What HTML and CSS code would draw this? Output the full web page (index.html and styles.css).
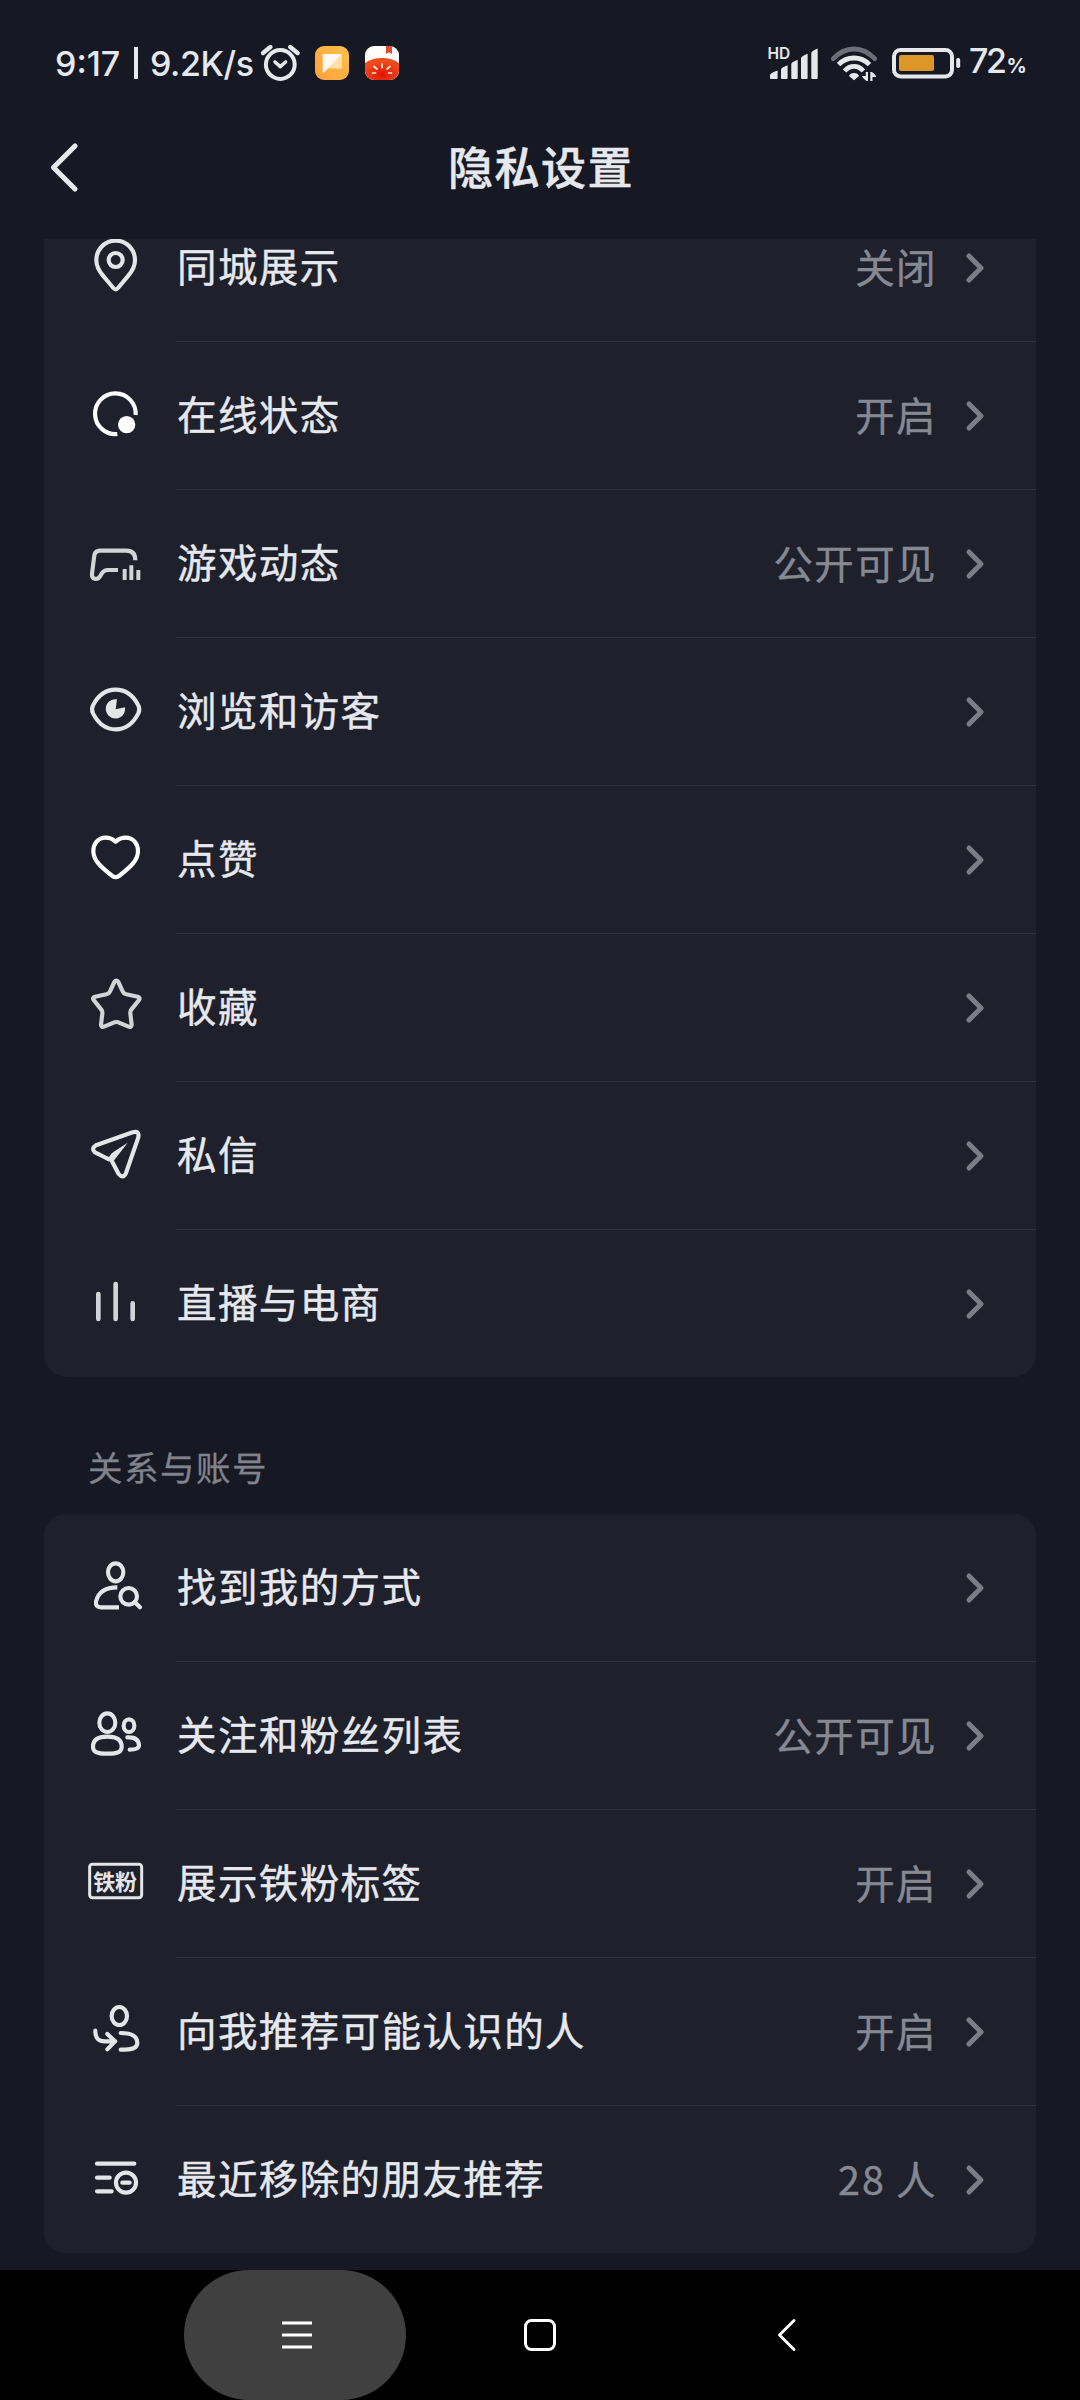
FILE: index.html
```html
<!DOCTYPE html>
<html lang="zh-CN">
<head>
<meta charset="utf-8">
<title>隐私设置</title>
<link rel="stylesheet" href="styles.css">
</head>
<body>
<div class="screen">
  <header class="status">
    <div class="status-left">
      <span class="clock">9:17</span><span class="bar"></span><span class="speed">9.2K/s</span>
      <svg class="alarm" width="42" height="40" viewBox="259 43 42 40">
        <g fill="none" stroke="#e6e8ec" stroke-width="4" stroke-linecap="round" stroke-linejoin="round">
          <circle cx="280.3" cy="64.5" r="14.4"/>
          <path d="M263 53l7.4-6M290.2 47l7.4 6" stroke-width="4.4"/>
          <path d="M275 62l5.3 4.6 5.3-4.6" stroke-width="3.6"/>
        </g>
      </svg>
      <svg class="app" width="34" height="34" viewBox="0 0 34 34">
        <defs><linearGradient id="amber" x1="0" y1="1" x2="1" y2="0"><stop offset="0" stop-color="#fda03c"/><stop offset="1" stop-color="#fdc04c"/></linearGradient></defs>
        <rect width="34" height="34" rx="9" fill="url(#amber)"/>
        <path d="M27 8v13a1.500 1.500 0 0 1-1.500 1.500H13z" fill="#ffe0a4"/>
        <path d="M7.700 9q0-1 1-1H27L9.500 26q-1.800 1.500-1.800-.5z" fill="#fffaf0"/>
      </svg>
      <svg class="app" width="34" height="34" viewBox="0 0 34 34">
        <defs>
          <clipPath id="tile"><rect width="34" height="34" rx="9"/></clipPath>
          <radialGradient id="tomato" cx=".5" cy=".75" r=".6"><stop offset="0" stop-color="#e01408"/><stop offset="1" stop-color="#f04c1c"/></radialGradient>
        </defs>
        <g clip-path="url(#tile)">
          <rect width="34" height="34" fill="#fffdfb"/>
          <path d="M21 0h6v8l-3-1.700L21 8z" fill="#e2492c"/>
          <path d="M0 17Q7 12 17 12t17 5v17H0z" fill="url(#tomato)"/>
          <path d="M7.500 27h3M9 20.500l3 2.500M17 18v3.500M25 20.500l-3 2.500M26.500 27h-3" stroke="#fff0d8" stroke-width="1.700" stroke-linecap="round"/>
        </g>
      </svg>
    </div>
    <div class="status-right">
      <svg width="204" height="42" viewBox="766 42 204 42">
        <text x="767.500" y="59.300" class="hd">HD</text>
        <g fill="#e6e8ec">
          <path d="M770 78v-3q0-2 7.600-4.500V78q0 1-1 1H771q-1 0-1-1z"/>
          <path d="M781 69.500q0-2 6.600-4.300V78q0 1-1 1H782q-1 0-1-1z"/>
          <path d="M791.300 64q0-2 6.400-4.300V78q0 1-1 1h-4.400q-1 0-1-1z"/>
          <path d="M801 58.300q0-2 6.600-4.500V78q0 1-1 1H802q-1 0-1-1z"/>
          <path d="M811.300 53q0-2 6.400-4.500V78q0 1-1 1h-4.400q-1 0-1-1z"/>
          <path d="M854 80.300l-5-4.400q1-3 5-3t5 3z"/>
          <path d="M865.800 72h2.200v9h-1.500q-4-3-4.500-5h3.800zM870.300 72h1.600q4 2.800 4.300 5h-3.700v4h-2.200z"/>
          <rect x="956.200" y="58" width="4" height="10" rx="1.800"/>
        </g>
        <g fill="none" stroke="#e6e8ec" stroke-width="4.800">
          <path d="M833.300 58.700Q842.500 49 854 49t20.700 9.700" stroke="#6d6e77" stroke-linecap="round"/>
          <path d="M838.600 64.600Q845 58 854 58t15.400 6.600"/>
          <path d="M844.600 71Q848.500 66.400 854 66.400t9.400 4.600" stroke-width="4.600"/>
          <rect x="894" y="50" width="58" height="26.400" rx="6.500" stroke-width="4"/>
        </g>
        <rect x="899" y="55" width="35" height="16" rx="2" fill="#dd9728"/>
      </svg>
      <span class="pct">72<small>%</small></span>
    </div>
  </header>
  <nav class="title-bar">
    <svg class="back" width="40" height="56" viewBox="44 139 40 56"><path d="M75 146L53.500 167.500 75 189" fill="none" stroke="#e6e8ec" stroke-width="5.200" stroke-linecap="round" stroke-linejoin="round"/></svg>
    <h1>隐私设置</h1>
  </nav>

  <main class="content">
    <section class="card card-scrolled">
      <div class="row">
        <svg class="icon" viewBox="165 54 180 180"><path d="M257 62c34 0 58 27 58 59 0 18-8 32-20 46l-31 37q-7 8-14 0l-31-37c-12-14-20-28-20-46 0-32 24-59 58-59z"/><circle cx="257" cy="120" r="21"/></svg>
        <div class="body"><span class="label">同城展示</span><span class="value">关闭</span><svg class="chev" viewBox="0 0 20 34"><path d="M4 5l12 12L4 29"/></svg></div>
      </div>
      <div class="row">
        <svg class="icon bright" viewBox="165 498 180 180"><path d="M262 642A61 61 0 1 1 317 585" stroke-linecap="butt"/><circle cx="290" cy="614" r="26" class="solid"/></svg>
        <div class="body"><span class="label">在线状态</span><span class="value">开启</span><svg class="chev" viewBox="0 0 20 34"><path d="M4 5l12 12L4 29"/></svg></div>
      </div>
      <div class="row">
        <svg class="icon dim" viewBox="165 942 180 180"><path d="M316 1021q0-29-27-29h-79q-14 0-17 14l-7 55c-2 18 16 20 24 8l7-11q6-8 16-8h31" stroke-linecap="butt"/><path d="M284 1047v33M304 1036v44M325 1050v30" stroke-linecap="butt" stroke-width="12"/></svg>
        <div class="body"><span class="label">游戏动态</span><span class="value">公开可见</span><svg class="chev" viewBox="0 0 20 34"><path d="M4 5l12 12L4 29"/></svg></div>
      </div>
      <div class="row">
        <svg class="icon" viewBox="165 126 180 180"><path d="M189 196c15-29 38-47 68-47s53 18 68 47q6 12 0 24c-15 29-38 48-68 48s-53-19-68-48q-6-12 0-24z"/><path class="solid" d="M261 178l-4 30 28-6a29 29 0 1 1-24-24z"/></svg>
        <div class="body"><span class="label">浏览和访客</span><svg class="chev" viewBox="0 0 20 34"><path d="M4 5l12 12L4 29"/></svg></div>
      </div>
      <div class="row">
        <svg class="icon bright" viewBox="165 570 180 180"><path d="M257 605q-13-12-30-12c-23 0-37 19-37 40 0 25 16 43 57 75q10 7 20 0c41-32 57-50 57-75 0-21-14-40-37-40q-17 0-30 12z"/></svg>
        <div class="body"><span class="label">点赞</span><svg class="chev" viewBox="0 0 20 34"><path d="M4 5l12 12L4 29"/></svg></div>
      </div>
      <div class="row">
        <svg class="icon dim" viewBox="165 1014 180 180"><path d="M253 1026q6-9 12 0l13 28q3 7 11 9l34 7q9 3 4 10l-23 29q-4 5-3 12l4 33q-1 9-9 6l-31-13q-6-2-12 0l-31 13q-8 3-9-6l4-33q1-7-3-12l-23-29q-5-7 4-10l34-7q8-2 11-9z"/></svg>
        <div class="body"><span class="label">收藏</span><svg class="chev" viewBox="0 0 20 34"><path d="M4 5l12 12L4 29"/></svg></div>
      </div>
      <div class="row">
        <svg class="icon" viewBox="165 138 180 180"><path d="M198 196L308 157q21-6 17 15l-37 107q-8 19-22 3l-22-42q-8-1-15-6l-34-17q-13-11 3-21z"/><path class="solid" d="M237 231q4-9 13-15l43-28-37 48-11 14z"/></svg>
        <div class="body"><span class="label">私信</span><svg class="chev" viewBox="0 0 20 34"><path d="M4 5l12 12L4 29"/></svg></div>
      </div>
      <div class="row last">
        <svg class="icon dim" viewBox="165 582 180 180"><path d="M205 642v75M257 612v105M308 670v47" stroke-width="14"/></svg>
        <div class="body"><span class="label">直播与电商</span><svg class="chev" viewBox="0 0 20 34"><path d="M4 5l12 12L4 29"/></svg></div>
      </div>
    </section>

    <h2>关系与账号</h2>

    <section class="card">
      <div class="row">
        <svg class="icon" viewBox="165 174 180 180"><ellipse cx="257" cy="217" rx="23" ry="27"/><path d="M262 262c-36 0-58 16-64 43q-2 17 15 17h54" stroke-linecap="butt"/><circle cx="296" cy="289" r="25"/><path d="M314 306l16 16"/></svg>
        <div class="body"><span class="label">找到我的方式</span><svg class="chev" viewBox="0 0 20 34"><path d="M4 5l12 12L4 29"/></svg></div>
      </div>
      <div class="row">
        <svg class="icon" viewBox="165 618 180 180"><ellipse cx="232" cy="668" rx="24" ry="28"/><path d="M232 710c28 0 43 10 43 30 0 15-10 21-43 21s-43-6-43-21c0-20 15-30 43-30z"/><ellipse cx="297" cy="677" rx="16" ry="19"/><path d="M292 712c23-1 34 7 35 23q1 14-28 14"/></svg>
        <div class="body"><span class="label">关注和粉丝列表</span><span class="value">公开可见</span><svg class="chev" viewBox="0 0 20 34"><path d="M4 5l12 12L4 29"/></svg></div>
      </div>
      <div class="row">
        <svg class="icon" viewBox="165 102 180 180"><rect x="179" y="133" width="156" height="100" rx="8" stroke-width="9"/><text x="190" y="209" class="badge">铁粉</text></svg>
        <div class="body"><span class="label">展示铁粉标签</span><span class="value">开启</span><svg class="chev" viewBox="0 0 20 34"><path d="M4 5l12 12L4 29"/></svg></div>
      </div>
      <div class="row">
        <svg class="icon" viewBox="165 546 180 180"><ellipse cx="268" cy="588" rx="23" ry="27"/><path d="M196 632c0 24 8 32 28 32h32M232 642l23 22-23 24"/><path d="M272 639c34 0 50 10 50 30 0 15-14 20-50 20"/></svg>
        <div class="body"><span class="label">向我推荐可能认识的人</span><span class="value">开启</span><svg class="chev" viewBox="0 0 20 34"><path d="M4 5l12 12L4 29"/></svg></div>
      </div>
      <div class="row last">
        <svg class="icon" viewBox="165 990 180 180"><path d="M201 1031h112M201 1073h38M201 1114h44"/><circle cx="288" cy="1088" r="30"/><path d="M277 1088h22"/></svg>
        <div class="body"><span class="label">最近移除的朋友推荐</span><span class="value"><span class="num">28</span> 人</span><svg class="chev" viewBox="0 0 20 34"><path d="M4 5l12 12L4 29"/></svg></div>
      </div>
    </section>
  </main>

  <footer class="nav">
    <div class="key pressed"><svg width="40" height="40" viewBox="0 0 40 40"><path d="M7 8h30M7 20h30M7 32h30"/></svg></div>
    <div class="key"><svg width="40" height="40" viewBox="0 0 40 40"><rect x="5.500" y="5.500" width="29" height="29" rx="6"/></svg></div>
    <div class="key"><svg width="40" height="40" viewBox="0 0 40 40"><path d="M29 5.500L14.500 20 29 34.500" stroke-linecap="round" stroke-linejoin="round"/></svg></div>
  </footer>
</div>
</body>
</html>
```
FILE: styles.css
```css
* { box-sizing: border-box; }
body {
  margin: 0;
  background: #161823;
  color: #e6e8ed;
  font-family: "Noto Sans CJK SC", sans-serif;
}
.screen {
  width: 1080px;
  height: 2400px;
  display: flex;
  flex-direction: column;
  overflow: hidden;
}

/* status bar */
.status {
  height: 126px;
  display: flex;
  justify-content: space-between;
  padding: 0 54px 0 55px;
  font-family: Inter, sans-serif;
  font-weight: 500;
  font-size: 34px;
  line-height: 126px;
}
.status-left, .status-right { display: flex; align-items: center; }
.clock { width: 79px; padding-top: 1px; }
.bar { width: 4px; height: 32px; background: #e6e8ec; margin-right: 12px; }
.speed { width: 109px; padding-top: 1px; white-space: nowrap; letter-spacing: -.4px; }
.alarm { margin-right: 14px; }
.app { margin-right: 16px; }
.hd { font: 600 15.500px Inter, sans-serif; fill: #e6e8ec; }
.pct { width: 56px; white-space: nowrap; letter-spacing: -2.500px; text-indent: -1px; }
.pct small { font-size: 20px; font-weight: 700; margin-left: 2px; }

/* title bar */
.title-bar {
  height: 113px;
  display: grid;
  grid-template-columns: 180px 1fr 180px;
  padding-bottom: 31px;
  align-items: center;
}
.back { margin-left: 44px; }
.title-bar h1 {
  margin: 0;
  text-align: center;
  font-size: 45px;
  font-weight: 500;
  letter-spacing: 1.500px;
  line-height: 80px;
  padding-left: 2px;
  padding-bottom: 2px;
  -webkit-text-stroke: .5px currentColor;
}

/* settings lists */
.content {
  height: 2031px;
  padding: 0 44px;
  overflow: hidden;
}
.card { background: #1e202b; border-radius: 22px; overflow: hidden; }
.card-scrolled { margin-top: -45px; }
.row { height: 148px; display: flex; align-items: center; padding-left: 41px; }
.icon {
  flex: none;
  width: 60px;
  height: 60px;
  margin-right: 31px;
  fill: none;
  stroke: #e4e5e9;
  stroke-width: 12.500;
  stroke-linecap: round;
  stroke-linejoin: round;
}
.icon.bright { stroke: #fff; }
.icon.dim { stroke: #d2d4d8; }
.icon .solid { fill: #e4e5e9; stroke: none; }
.icon.bright .solid { fill: #fff; }
.badge { font: 700 66px "Noto Sans CJK SC", sans-serif; fill: #e4e5e9; stroke: none; letter-spacing: -1px; }
.body {
  flex: 1;
  height: 148px;
  display: flex;
  align-items: center;
  padding-right: 51px;
  border-bottom: 1px solid #30323c;
}
.last { margin-bottom: -1px; }
.last .body { border-color: transparent; }
.label, .value {
  font-size: 39.500px;
  letter-spacing: 1.400px;
  line-height: 60px;
  -webkit-text-stroke: .4px currentColor;
}
.label { flex: 1; padding-left: 1px; padding-bottom: 5px; }
.value { color: #868892; padding-bottom: 3px; margin-right: 28px; }
.num { letter-spacing: 2px; }
.chev {
  width: 20px;
  height: 34px;
  fill: none;
  stroke: #7b7d87;
  stroke-width: 5;
  stroke-linecap: round;
  stroke-linejoin: round;
}
h2 {
  margin: 0;
  height: 137px;
  padding: 59px 0 0 44px;
  font-size: 34.500px;
  font-weight: 400;
  letter-spacing: 1.500px;
  line-height: 60px;
  color: #81838c;
  -webkit-text-stroke: .3px currentColor;
}

/* system navigation */
.nav {
  height: 130px;
  background: #000;
  display: grid;
  grid-template-columns: 222px 222px 222px;
  column-gap: 23px;
  padding-left: 184px;
}
.key { display: flex; align-items: center; justify-content: center; border-radius: 65px; }
.key.pressed { background: #404040; }
.key svg { fill: none; stroke: #fff; stroke-width: 3; }
```
